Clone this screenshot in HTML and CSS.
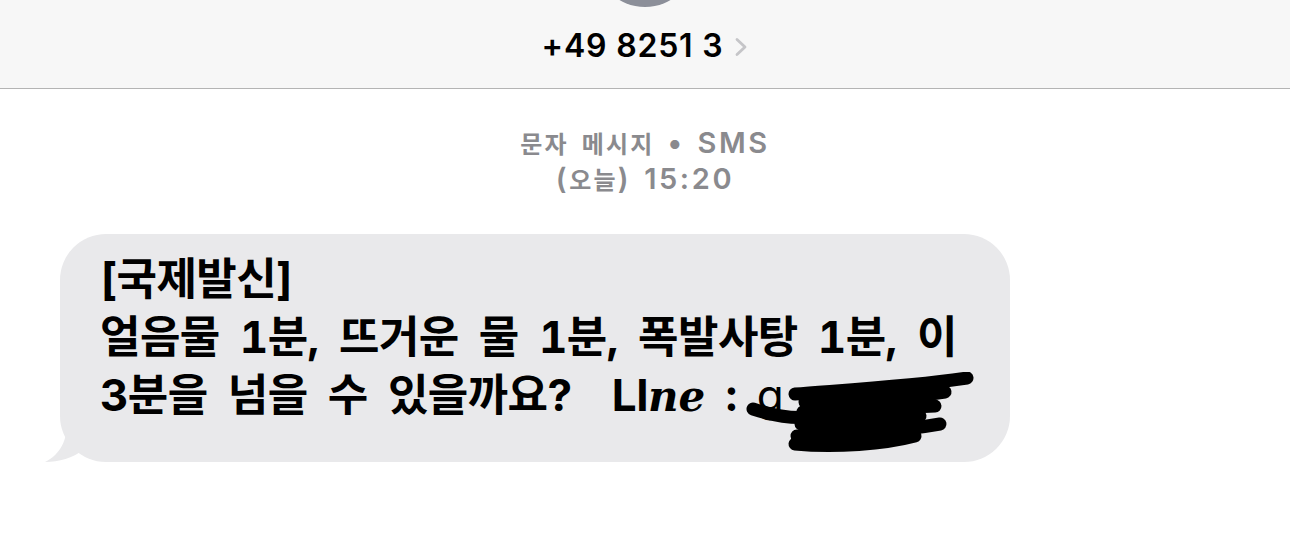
FILE: index.html
```html
<!DOCTYPE html>
<html lang="ko">
<head>
  <meta charset="UTF-8" />
  <title>메시지</title>
  <link rel="stylesheet" href="styles.css">
</head>
<body>
  <div class="header">
    <div class="avatar"></div>
    <div class="contact">
      <span class="number">+49 8251 3</span>
      <svg class="chevron" width="14" height="20" viewBox="0 0 14 20"><path d="M3 2.5 L11 10 L3 17.5" fill="none" stroke="#c5c5c8" stroke-width="2.8" stroke-linecap="round" stroke-linejoin="round"/></svg>
    </div>
  </div>

  <div class="thread">
    <div class="meta">
      <div><span class="ko">문자 메시지</span> • SMS</div>
      <div>(<span class="ko">오늘</span>) 15:20</div>
    </div>

    <div class="bubble">
      <p class="text">[국제발신]<br>얼음물 1분, 뜨거운 물 1분, 폭발사탕 1분, 이<br>3분을 넘을 수 있을까요?&nbsp; LI<i class="math">ne</i> : <span class="hidden">g<svg class="scribble" width="240" height="90" viewBox="0 0 240 90">
        <g fill="none" stroke="#000" stroke-width="13" stroke-linecap="round" stroke-linejoin="round">
          <path d="M8 37 C30 44 50 48 70 44"/>
          <path d="M50 22 C100 18 170 14 222 6"/>
          <path d="M60 30 C110 28 160 26 200 20"/>
          <path d="M58 40 C110 38 150 36 190 34"/>
          <path d="M56 52 C100 50 140 48 175 44"/>
          <path d="M52 64 C100 62 150 60 195 52"/>
          <path d="M50 72 C90 76 140 72 170 64"/>
        </g>
        <rect x="58" y="20" width="110" height="46" fill="#000"/>
      </svg></span></p>
      <svg class="tail" width="40" height="40" viewBox="0 0 40 40"><path d="M22 0 C22 18 16 32 0 40 C14 40 28 36 38 28 L38 0 Z" fill="#e9e9eb"/></svg>
    </div>
  </div>
</body>
</html>
```

FILE: styles.css
```css
body { margin: 0; background: #fff; font-family: "Inter", "Noto Sans CJK KR", sans-serif; overflow: hidden; }
.header { height: 88px; background: #f7f7f7; border-bottom: 1px solid #b4b4b4; display: flex; flex-direction: column; align-items: center; overflow: hidden; }
.avatar { width: 100px; height: 100px; border-radius: 50%; background: #8c8f99; margin-top: -93px; flex-shrink: 0; }
.contact { display: flex; align-items: center; gap: 11px; margin-top: 19px; }
.number { font-family: "Inter", sans-serif; font-weight: 600; font-size: 32px; color: #000; letter-spacing: 0.8px; }
.chevron { margin-top: 3px; }
.thread { padding: 36px 0 0 60px; }
.meta { font-family: "Inter", "Noto Sans CJK KR", sans-serif; font-weight: 600; font-size: 29px; line-height: 36px; color: #8a8a8e; text-align: center; width: 1290px; margin-left: -60px; letter-spacing: 2.6px; word-spacing: 3px; }
.ko { font-family: "Noto Sans CJK KR", sans-serif; font-weight: 700; font-size: 24px; letter-spacing: 2.2px; word-spacing: 4px; }
.bubble { position: relative; width: 950px; margin-top: 37px; background: #e9e9eb; border-radius: 46px; box-sizing: border-box; padding: 16px 20px 36px 40px; }
.text { margin: 0; font-family: "Inter", "Noto Sans CJK KR", sans-serif; font-weight: 700; font-size: 44px; line-height: 58px; color: #000; letter-spacing: -0.6px; word-spacing: 9px; font-variant-numeric: tabular-nums; }
.math { font-family: "DejaVu Serif", serif; font-style: italic; font-weight: 700; font-size: 42px; letter-spacing: 0; }
.hidden { position: relative; font-weight: 400; }
.tail { position: absolute; left: -15px; bottom: 0; }
.scribble { position: absolute; left: -12px; top: 4px; }
```
